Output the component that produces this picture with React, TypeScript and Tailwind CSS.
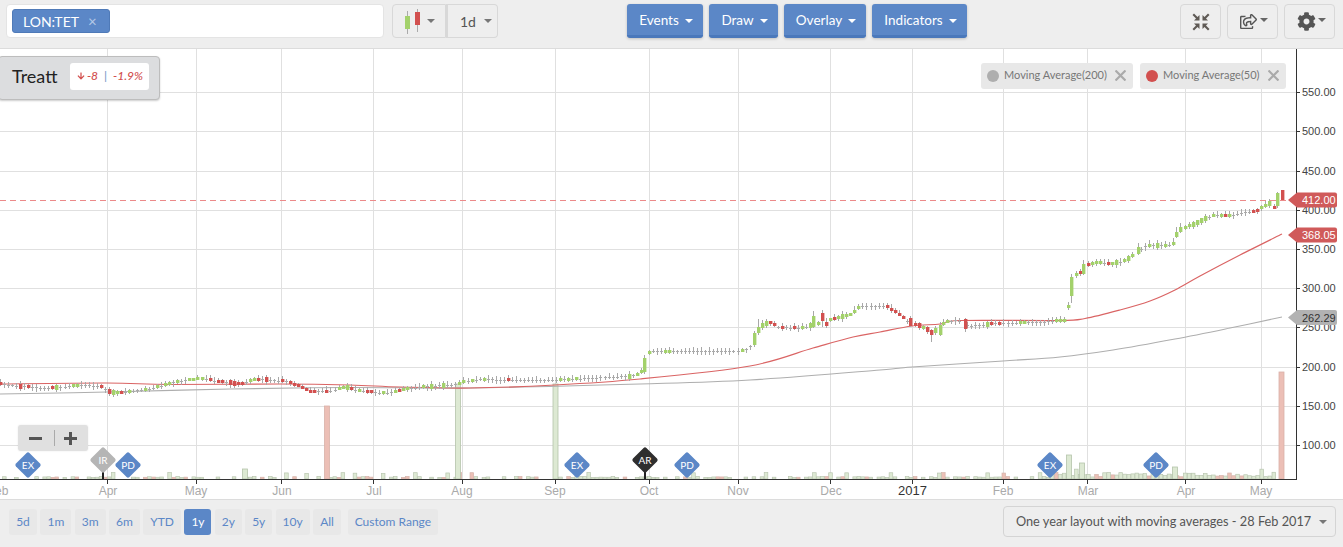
import React from "react";
import { FaCog, FaRegShareSquare, FaArrowDown } from "react-icons/fa";

const h = (n: number) => {
  const v = Math.sin(n * 12.9898) * 43758.5453;
  return v - Math.floor(v);
};

const PATH: [number, number][] = [
  [-4, 383], [10, 385], [30, 387], [50, 388], [80, 385], [100, 386], [107, 391], [115, 393], [130, 391], [150, 389],
  [170, 383], [200, 378], [215, 381], [240, 384], [255, 379], [285, 381], [300, 386], [310, 391], [330, 391], [345, 387],
  [360, 391], [385, 393], [400, 390], [420, 387], [458, 384], [465, 381], [480, 379], [510, 380], [555, 380], [590, 378],
  [630, 376], [640, 374], [648, 353], [652, 351], [670, 351], [738, 351], [748, 349], [762, 325], [768, 322], [778, 327],
  [800, 328], [810, 326], [830, 320], [850, 315], [860, 306], [885, 306], [900, 315], [908, 322], [925, 328], [932, 333],
  [945, 322], [958, 320], [970, 326], [1000, 323], [1040, 322], [1066, 320], [1072, 278], [1075, 275], [1079, 274], [1083, 269],
  [1087, 265], [1100, 262], [1113, 264], [1125, 260], [1134, 255], [1138, 250], [1147, 245], [1172, 245], [1176, 235], [1185, 227],
  [1193, 224], [1206, 218], [1214, 215], [1231, 215], [1252, 211], [1256, 212], [1261, 208], [1269, 203], [1273, 207],
];

const yAt = (x: number) => {
  for (let i = 1; i < PATH.length; i++) {
    if (x <= PATH[i][0]) {
      const [a, b] = PATH[i - 1];
      const [c, d] = PATH[i];
      return b + ((x - a) / (c - a)) * (d - b);
    }
  }
  return PATH[PATH.length - 1][1];
};

type C = [number, number, number, number, number, string];
const G = "#a3d16b";
const R = "#d2504f";
const EXPLICIT: C[] = [
  [1071, 277, 296, 274, 303, G],
  [1083, 264, 274, 260, 275, G],
  [1138, 247, 254, 243, 255, G],
  [1176, 232, 237, 227, 238, G],
  [1180, 227, 232, 223, 233, G],
  [1277, 193, 206, 192, 208, G],
  [1282, 190, 200, 190, 200, R],
  [644, 358, 372, 355, 374, G],
  [754, 333, 345, 331, 347, G],
  [758, 327, 333, 319, 335, G],
  [813, 316, 327, 311, 328, G],
  [822, 313, 321, 310, 327, R],
  [826, 322, 326, 318, 328, R],
  [910, 318, 326, 316, 327, R],
  [931, 330, 335, 329, 342, R],
  [940, 325, 335, 322, 336, G],
  [965, 319, 329, 318, 332, R],
];

const REDS = [2, 19, 27, 52, 99, 107, 120, 209, 217, 221, 230, 234, 238, 243, 259, 264, 281, 289, 293, 297, 302, 306, 310, 314, 327, 352, 365, 369, 399, 509, 771, 775, 783, 792, 834, 885, 889, 893, 897, 902, 914, 918, 927, 990, 999, 1079, 1087, 1109, 1227, 1252, 1256, 1273];
const GREENS = [57, 74, 78, 112, 116, 128, 145, 158, 166, 171, 179, 188, 192, 196, 200, 251, 255, 337, 341, 345, 357, 382, 395, 403, 407, 424, 433, 445, 458, 462, 471, 483, 559, 568, 576, 627, 635, 640, 648, 665, 669, 741, 762, 766, 800, 804, 809, 817, 830, 838, 842, 847, 851, 855, 859, 923, 935, 944, 948, 986, 1020, 1024, 1054, 1058, 1062, 1066, 1075, 1092, 1096, 1100, 1113, 1117, 1125, 1130, 1134, 1147, 1155, 1163, 1172, 1185, 1189, 1193, 1197, 1201, 1206, 1214, 1223, 1231, 1261, 1265, 1269];

const near = (list: number[], x: number) => list.some((v) => Math.abs(v - x) < 2);

const candles: C[] = [];
for (let i = 0; i < 322; i++) {
  const x = 1273.5 - i * 4.03;
  if (EXPLICIT.some((e) => Math.abs(e[0] - x) < 2)) continue;
  const y = yAt(x);
  const r2 = h(i + 301);
  const r3 = h(i + 601);
  const isR = near(REDS, x);
  const isG = !isR && near(GREENS, x);
  if (isR || isG) {
    const s = 1.5 + (r2 > 0.8 ? 1 : 0);
    candles.push([x, y - s, y + s, y - s - r3 * 3.5, y + s + r2 * 2.5, isR ? R : G]);
  } else {
    candles.push([x, y, y + 1, y - 1 - r2 * 3, y + 2 + r3 * 2.5, "#aaa"]);
  }
}
candles.push(...EXPLICIT);

const vols: { x: number; t: number; red: boolean }[] = [];
for (let i = 0; i < 322; i++) {
  const x = 1273.5 - i * 4.03;
  const r = h(i + 1000);
  let v: number;
  if (x > 1050) v = 2 + r * 5 + (h(i + 1500) > 0.9 ? 4 : 0);
  else v = r < 0.35 ? 0 : 1 + r * 1.5 + (h(i + 1500) > 0.88 ? 4 : 0);
  vols.push({ x, t: 479 - v, red: h(i + 1300) < 0.2 });
}
const BIGV: { x: number; t: number; red: boolean }[] = [
  { x: 327, t: 406, red: true },
  { x: 458, t: 384, red: false },
  { x: 555.5, t: 384, red: false },
  { x: 1069, t: 455, red: false },
  { x: 1082, t: 463, red: false },
  { x: 1281.5, t: 372, red: true },
  { x: 1175, t: 467, red: false },
  { x: 245, t: 469, red: false },
];

const smooth = (pts: [number, number][]) => {
  let d = `M${pts[0][0]} ${pts[0][1]}`;
  for (let i = 0; i < pts.length - 1; i++) {
    const p0 = pts[Math.max(i - 1, 0)];
    const p1 = pts[i];
    const p2 = pts[i + 1];
    const p3 = pts[Math.min(i + 2, pts.length - 1)];
    const c1x = p1[0] + (p2[0] - p0[0]) / 6;
    const c1y = p1[1] + (p2[1] - p0[1]) / 6;
    const c2x = p2[0] - (p3[0] - p1[0]) / 6;
    const c2y = p2[1] - (p3[1] - p1[1]) / 6;
    d += ` C${c1x} ${c1y} ${c2x} ${c2y} ${p2[0]} ${p2[1]}`;
  }
  return d;
};

const MA50 = smooth([[0, 384], [107, 383], [170, 384.5], [280, 384], [350, 385], [400, 387], [470, 388], [555, 385], [640, 379], [750, 366], [813, 348], [853, 337], [880, 332], [912, 326], [940, 324], [960, 320.5], [1060, 320.5], [1085, 318.5], [1120, 310], [1150, 301], [1175, 290], [1200, 276], [1240, 255], [1282, 234]]);
const MA200 = smooth([[0, 394], [107, 392], [230, 389], [350, 387.5], [470, 388], [640, 384], [750, 380], [880, 370], [912, 367], [1003, 361], [1060, 357], [1113, 350], [1175, 339], [1230, 328], [1282, 317]]);

const HLINES = [92, 131, 171, 210, 249, 288, 327, 367, 406, 445];
const PRICE = ["550.00", "500.00", "450.00", "400.00", "350.00", "300.00", "250.00", "200.00", "150.00", "100.00"];
const VLINES = [107, 196, 281, 373, 462, 555, 649, 738, 830, 912, 1003, 1087, 1185, 1261];
const MONTHS: [string, number][] = [
  ["Feb", -2], ["Apr", 108], ["May", 196], ["Jun", 282], ["Jul", 374], ["Aug", 462], ["Sep", 555], ["Oct", 649],
  ["Nov", 738], ["Dec", 831], ["Mar", 1088], ["Apr", 1186], ["May", 1261], ["Feb", 1003],
];
const MARKERS: [string, number, number, string, boolean][] = [
  ["EX", 28, 465, "#5b87c7", false],
  ["IR", 103, 460, "#b5b5b5", true],
  ["PD", 128, 465, "#5b87c7", false],
  ["EX", 577, 465, "#5b87c7", false],
  ["AR", 645, 460, "#2f2f2f", true],
  ["PD", 687, 465, "#5b87c7", false],
  ["EX", 1050, 465, "#5b87c7", false],
  ["PD", 1156, 465, "#5b87c7", false],
];
const FLAGS: [string, number, string, string][] = [
  ["412.00", 200, "#d05a5a", "#ffffff"],
  ["368.05", 235, "#d05a5a", "#ffffff"],
  ["262.29", 317.5, "#b2b2b2", "#333333"],
];

function Chart() {
  const arial = { fontFamily: '"Liberation Sans", Arial, sans-serif' };
  return (
    <svg viewBox="0 49 1343 450" width={1343} height={450} className="block">
      {HLINES.map((y) => (
        <line key={y} x1={0} x2={1296} y1={y + 0.5} y2={y + 0.5} stroke="#e0e0e0" />
      ))}
      {VLINES.map((x) => (
        <line key={x} x1={x + 0.5} x2={x + 0.5} y1={49} y2={479} stroke="#e0e0e0" />
      ))}
      {vols.map((v, i) =>
        v.t < 479 ? (
          <rect key={i} x={v.x - 1.5} y={v.t} width={3.6} height={479 - v.t} fill={v.red ? "#ecc0b6" : "#dde9d3"} stroke={v.red ? "#d5b3aa" : "#b9c6b0"} strokeWidth={0.7} />
        ) : null
      )}
      {BIGV.map((v, i) => (
        <rect key={i} x={v.x - 2.5} y={v.t} width={5} height={479 - v.t} fill={v.red ? "#ecbfb6" : "#dde9d3"} stroke={v.red ? "#d9b1a8" : "#b5c4ab"} strokeWidth={0.8} />
      ))}
      <line x1={0} x2={1288} y1={200.5} y2={200.5} stroke="#ec8a8a" strokeDasharray="6 4" />
      <path d={MA200} fill="none" stroke="#aeaeae" strokeWidth={1.1} />
      <path d={MA50} fill="none" stroke="#da6464" strokeWidth={1.2} />
      {candles.map(([x, t, b, wt, wb, c], i) => {
        const cx = Math.round(x);
        const top = Math.round(t);
        const ht = Math.max(Math.round(b - t), 1);
        return (
          <g key={i}>
            <line x1={cx + 0.5} x2={cx + 0.5} y1={Math.round(wt)} y2={Math.round(wb)} stroke="#a8a8a8" />
            <rect x={cx - 1} y={top} width={c === "#aaa" ? 3 : 3.4} height={ht} fill={c} />
          </g>
        );
      })}
      <line x1={0} x2={1296} y1={479.5} y2={479.5} stroke="#333" />
      <line x1={1296.5} x2={1296.5} y1={49} y2={480} stroke="#333" />
      {VLINES.map((x) => (
        <line key={x} x1={x + 0.5} x2={x + 0.5} y1={479} y2={484} stroke="#333" />
      ))}
      {HLINES.map((y) => (
        <line key={y} x1={1296} x2={1300} y1={y + 0.5} y2={y + 0.5} stroke="#333" />
      ))}
      {PRICE.map((p, i) => (
        <text key={p} x={1302} y={HLINES[i] + 3.5} fontSize={11} fill="#444" style={arial}>
          {p}
        </text>
      ))}
      {MONTHS.map(([m, x]) => (
        <text key={m + x} x={x} y={495} textAnchor="middle" fontSize={12} fill="#aaaaaa" style={arial}>
          {m}
        </text>
      ))}
      <text x={912.5} y={495} textAnchor="middle" fontSize={13} fill="#333" style={arial}>
        2017
      </text>
      {MARKERS.map(([t, x, y, c, stem]) => (
        <g key={t + x}>
          {stem && <line x1={x} x2={x} y1={y} y2={479} stroke="#222" strokeWidth={2} />}
          <rect x={x - 9.5} y={y - 9.5} width={19} height={19} rx={2} fill={c} transform={`rotate(45 ${x} ${y})`} />
          <text x={x} y={y + 3.5} textAnchor="middle" fontSize={10} fill="#fff" style={{ fontFamily: "Lato, sans-serif" }}>
            {t}
          </text>
        </g>
      ))}
      {FLAGS.map(([t, y, c, tc]) => (
        <g key={t}>
          <path d={`M1288 ${y} L1297 ${y - 7.5} H1335 Q1337 ${y - 7.5} 1337 ${y - 5.5} V${y + 5.5} Q1337 ${y + 7.5} 1335 ${y + 7.5} H1297 Z`} fill={c} />
          <text x={1302} y={y + 4} fontSize={11} fill={tc} style={arial}>
            {t}
          </text>
        </g>
      ))}
    </svg>
  );
}

const Caret = ({ c = "border-t-white" }: { c?: string }) => (
  <span className={`inline-block w-0 h-0 border-x-[4px] border-t-[4px] border-x-transparent ${c}`} />
);

const Compress = () => (
  <svg width={18} height={18} viewBox="0 0 18 18" fill="#5f5a55">
    <path d="M0.5 2 L2 0.5 L5.5 4 L7.5 2 V7.5 H2 L4 5.5 Z" />
    <path d="M17.5 2 L16 0.5 L12.5 4 L10.5 2 V7.5 H16 L14 5.5 Z" />
    <path d="M0.5 16 L2 17.5 L5.5 14 L7.5 16 V10.5 H2 L4 12.5 Z" />
    <path d="M17.5 16 L16 17.5 L12.5 14 L10.5 16 V10.5 H16 L14 12.5 Z" />
  </svg>
);

const X = () => (
  <svg width={11} height={11} viewBox="0 0 11 11" stroke="#aaaaaa" strokeWidth={2.2}>
    <path d="M0.5 0.5 L10.5 10.5 M10.5 0.5 L0.5 10.5" />
  </svg>
);

const TOP = [
  ["Events", "w-[76px]"],
  ["Draw", "w-[69px]"],
  ["Overlay", "w-[82px]"],
  ["Indicators", "w-[95px]"],
];
const RANGE: [string, string][] = [
  ["5d", "w-[28px]"], ["1m", "w-[31px]"], ["3m", "w-[31px]"], ["6m", "w-[30.5px]"], ["YTD", "w-[38px]"],
  ["1y", "w-[27px]"], ["2y", "w-[27px]"], ["5y", "w-[27px]"], ["10y", "w-[34px]"], ["All", "w-[28px]"],
];

export default function App() {
  return (
    <div className="w-[1343px] h-[547px] overflow-hidden bg-[#eeeeee] flex flex-col font-['Lato',sans-serif]">
      <header className="h-[49px] shrink-0 border-b border-[#dcdcdc] flex items-start pt-1 pl-[6px]">
        <div className="w-[378px] h-[34px] bg-white border border-[#e4e4e4] rounded flex items-center pl-[5px]">
          <div className="w-[98px] h-[24px] bg-[#5b87c7] border border-[#4f7ab8] rounded-[3px] flex items-center pl-[10px] gap-[9px] text-white text-[14px]">
            <span>LON:TET</span>
            <span className="text-[#b5c9e6] text-[15px] leading-none">×</span>
          </div>
        </div>
        <div className="ml-2 flex h-[34px]">
          <div className="w-[54px] border border-[#d8d8d8] rounded-l flex items-center pl-[10px] gap-[4px]">
            <svg width={20} height={26} viewBox="0 0 20 26">
              <line x1={4.5} x2={4.5} y1={3} y2={26} stroke="#aaa" />
              <rect x={2} y={8} width={5} height={13} fill="#a3d16b" />
              <line x1={14.5} x2={14.5} y1={1} y2={24} stroke="#aaa" />
              <rect x={12} y={4} width={5} height={13} fill="#d2504f" />
            </svg>
            <Caret c="border-t-[#777]" />
          </div>
          <div className="w-[52px] border border-[#d8d8d8] border-l-2 rounded-r flex items-center pl-[12px] gap-[8px] text-[14px] text-[#555]">
            <span>1d</span>
            <Caret c="border-t-[#777]" />
          </div>
        </div>
        <div className="ml-[129px] flex gap-[6px]">
          {TOP.map(([t, w]) => (
            <div key={t} className={`${w} h-[34px] bg-[#5b87c7] border-b-[3px] border-[#4a78bb] rounded-[3px] shadow-[0_1px_3px_rgba(0,0,0,0.2)] flex items-center justify-center gap-[6px] pl-[2px] pt-[2px] text-white text-[13.5px]`}>
              <span>{t}</span>
              <Caret />
            </div>
          ))}
        </div>
        <div className="ml-[213px] flex gap-[6px]">
          <div className="w-[41px] h-[35px] border border-[#d8d8d8] rounded flex items-center justify-center">
            <Compress />
          </div>
          <div className="w-[51px] h-[35px] border border-[#d8d8d8] rounded flex items-center justify-center gap-[3px] pl-[2px] text-[#555]">
            <FaRegShareSquare size={17} />
            <span className="-mt-1 flex"><Caret c="border-t-[#666]" /></span>
          </div>
          <div className="w-[51px] h-[35px] border border-[#d8d8d8] rounded flex items-center justify-center gap-[2px] pl-[3px] text-[#555]">
            <FaCog size={19} />
            <span className="-mt-1 flex"><Caret c="border-t-[#666]" /></span>
          </div>
        </div>
      </header>

      <main className="relative h-[450px] shrink-0 bg-white">
        <Chart />
        <div className="absolute left-[-2px] top-[7px] w-[162px] h-[44px] bg-[#dcdddf] border border-[#bdbdbd] rounded shadow-[0_1px_2px_rgba(0,0,0,0.2)] flex items-center pl-[13px] pb-[4px]">
          <span className="text-[18px] text-[#222]">Treatt</span>
          <div className="ml-[13px] w-[79px] h-[27px] bg-white rounded-[3px] flex items-center justify-center gap-[2px] text-[12px] font-medium italic text-[#d2504f]">
            <FaArrowDown size={8} />
            <span>-8</span>
            <span className="text-[#7a9cc9] mx-[4px] not-italic">|</span>
            <span>-1.9%</span>
          </div>
        </div>
        <div className="absolute left-[981px] top-[14px] flex gap-[7px]">
          <div className="w-[152px] h-[26px] pb-px bg-[#e8e8e8] rounded-[3px] flex items-center pl-[6px] gap-[5px] text-[11px] text-[#777] whitespace-nowrap">
            <span className="w-[12px] h-[12px] rounded-full bg-[#aeaeae]" />
            <span>Moving Average(200)</span>
            <span className="ml-[3px] flex"><X /></span>
          </div>
          <div className="w-[146px] h-[26px] pb-px bg-[#e8e8e8] rounded-[3px] flex items-center pl-[6px] gap-[5px] text-[11px] text-[#777] whitespace-nowrap">
            <span className="w-[12px] h-[12px] rounded-full bg-[#d2504f]" />
            <span>Moving Average(50)</span>
            <span className="ml-[3px] flex"><X /></span>
          </div>
        </div>
        <div className="absolute left-[18px] top-[376px] w-[70px] h-[26px] bg-[#e0e0e0] rounded-[3px] shadow-[0_0_2px_rgba(0,0,0,0.1)] flex items-center">
          <span className="ml-[11px] w-[13px] h-[3px] bg-[#555]" />
          <span className="ml-[12px] w-px h-[16px] bg-[#aaa]" />
          <span className="ml-[9px] relative w-[13px] h-[13px] flex items-center justify-center">
            <span className="w-[13px] h-[3px] bg-[#555]" />
            <span className="absolute w-[3px] h-[13px] bg-[#555]" />
          </span>
        </div>
      </main>

      <footer className="flex-1 border-t border-[#dcdcdc] flex items-start pl-[9px] pt-[9px]">
        <div className="flex gap-[3.4px]">
          {RANGE.map(([t, w]) => (
            <div key={t} className={`${w} h-[26px] rounded-[3px] flex items-center justify-center text-[12px] ${t === "1y" ? "bg-[#5b87c7] text-white" : "bg-[#e8e8e8] text-[#5b87c7]"}`}>
              {t}
            </div>
          ))}
          <div className="ml-[3.5px] w-[90px] h-[26px] rounded-[3px] bg-[#e8e8e8] flex items-center justify-center text-[12px] text-[#5b87c7] whitespace-nowrap">
            Custom Range
          </div>
        </div>
        <div className="ml-[565px] -mt-[3px] w-[333px] h-[31px] border border-[#d4d4d4] rounded flex items-center pl-[12px] gap-[8px] text-[12.75px] text-[#555] whitespace-nowrap">
          <span>One year layout with moving averages - 28 Feb 2017</span>
          <Caret c="border-t-[#777]" />
        </div>
      </footer>
    </div>
  );
}
